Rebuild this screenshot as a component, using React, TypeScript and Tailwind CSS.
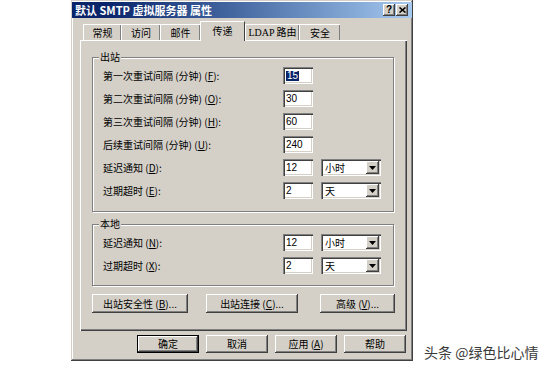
import type { ReactNode } from "react";

const raised =
  "bg-[#D4D0C8] shadow-[inset_-1px_-1px_0_#404040,inset_1px_1px_0_#ffffff,inset_-2px_-2px_0_#808080]";
const sunken =
  "bg-white shadow-[inset_1px_1px_0_#808080,inset_2px_2px_0_#404040,inset_-1px_-1px_0_#ffffff,inset_-2px_-2px_0_#D4D0C8]";

function Field({ value, selected }: { value: string; selected?: boolean }) {
  return (
    <div className={`flex h-[17px] w-[30px] items-center pl-[3px] font-['Liberation_Sans',sans-serif] text-[10px] leading-none ${sunken}`}>
      <span className={selected ? "bg-[#0A246A] px-[1px] text-white" : "text-black"}>{value}</span>
    </div>
  );
}

function Combo({ value }: { value: string }) {
  return (
    <div className={`ml-[8px] flex h-[17px] w-[60px] items-center justify-between pl-[4px] pr-[2px] text-[10px] leading-none ${sunken}`}>
      <span>{value}</span>
      <div className={`flex h-[13px] w-[13px] items-center justify-center ${raised}`}>
        <svg width="7" height="4" viewBox="0 0 7 4">
          <path d="M0 0h7L3.5 4z" fill="#000" />
        </svg>
      </div>
    </div>
  );
}

function Row({ label, value, unit, selected }: { label: ReactNode; value: string; unit?: string; selected?: boolean }) {
  return (
    <div className="flex h-[17px] items-center">
      <span className="w-[180px] text-[10px] leading-none text-black">{label}</span>
      <Field value={value} selected={selected} />
      {unit && <Combo value={unit} />}
    </div>
  );
}

function Group({ title, className, children }: { title: string; className: string; children: ReactNode }) {
  return (
    <div className={`relative flex w-[302px] flex-col gap-[6px] border border-[#808080] pl-[10px] pt-[9px] shadow-[1px_1px_0_#ffffff,inset_1px_1px_0_#ffffff] ${className}`}>
      <span className="absolute -top-[8px] left-[6px] bg-[#D4D0C8] px-[1px] text-[10px] leading-[14px]">{title}</span>
      {children}
    </div>
  );
}

function Btn({ children, className, def }: { children: ReactNode; className: string; def?: boolean }) {
  return (
    <div className={`flex items-center justify-center text-[10px] leading-none text-black ${def ? "border border-black" : ""} ${raised} ${className}`}>
      {children}
    </div>
  );
}

const tabs = [
  { name: "常规", w: "w-[38px]" },
  { name: "访问", w: "w-[39px]" },
  { name: "邮件", w: "w-[40px]" },
  { name: "传递", w: "w-[45px]", active: true },
  { name: "LDAP 路由", w: "w-[54px]" },
  { name: "安全", w: "w-[41px]" },
];

export default function App() {
  return (
    <div className="flex h-[367px] w-[548px] bg-white font-['Noto_Sans_CJK_SC','Noto_Sans',sans-serif] text-black">
      <div className="ml-[71px] flex h-[361px] w-[342px] flex-col bg-[#D4D0C8] pt-[2px] shadow-[inset_-1px_-1px_0_#404040,inset_1px_1px_0_#D4D0C8,inset_-2px_-2px_0_#808080,inset_2px_2px_0_#ffffff]">
        {/* title bar */}
        <div className="mx-[1px] flex h-[16px] items-center justify-between bg-linear-to-r from-[#0A246A] from-10% to-[#A6CAF0] pl-[3px] pr-[4px]">
          <span className="text-[11px] font-bold leading-none text-white">默认 SMTP 虚拟服务器 属性</span>
          <div className="flex gap-[1px]">
            <div className={`flex h-[12px] w-[12px] items-center justify-center font-['Liberation_Sans',sans-serif] text-[10px] font-bold leading-none ${raised}`}>?</div>
            <div className={`flex h-[12px] w-[12px] items-center justify-center ${raised}`}>
              <svg width="7" height="6" viewBox="0 0 7 6">
                <path d="M0.5 0.5l6 5M6.5 0.5l-6 5" stroke="#000" strokeWidth="1.6" />
              </svg>
            </div>
          </div>
        </div>

        {/* tabs */}
        <div className="ml-[12px] mt-[4px] flex h-[18px] items-end">
          {tabs.map((t) => (
            <div
              key={t.name}
              className={`flex items-center justify-center border-l border-t border-white border-r-[#404040] text-[10px] leading-none ${t.w} ${
                t.active
                  ? "relative z-10 -mb-[1px] h-[20px] border-r bg-[#D4D0C8] pb-[2px]"
                  : "h-[16px] shadow-[inset_-1px_0_0_#808080]"
              } ${t.name.startsWith("LDAP") ? "font-['Liberation_Serif','Noto_Sans_CJK_SC',serif]" : ""}`}
            >
              {t.name}
            </div>
          ))}
        </div>

        {/* panel */}
        <div className="ml-[9px] flex h-[291px] w-[327px] flex-col border-l border-t border-white pl-[11px] pt-[16px] shadow-[inset_-1px_-1px_0_#404040,inset_-2px_-2px_0_#808080]">
          <Group title="出站" className="h-[155px]">
            <Row label={<>第一次重试间隔 (分钟) (<u>F</u>):</>} value="15" selected />
            <Row label={<>第二次重试间隔 (分钟) (<u>O</u>):</>} value="30" />
            <Row label={<>第三次重试间隔 (分钟) (<u>H</u>):</>} value="60" />
            <Row label={<>后续重试间隔 (分钟) (<u>U</u>):</>} value="240" />
            <Row label={<>延迟通知 (<u>D</u>):</>} value="12" unit="小时" />
            <Row label={<>过期超时 (<u>E</u>):</>} value="2" unit="天" />
          </Group>
          <Group title="本地" className="mt-[12px] h-[62px]">
            <Row label={<>延迟通知 (<u>N</u>):</>} value="12" unit="小时" />
            <Row label={<>过期超时 (<u>X</u>):</>} value="2" unit="天" />
          </Group>
          <div className="mt-[8px] flex">
            <Btn className="h-[19px] w-[96px]">出站安全性 (<u>B</u>)...</Btn>
            <Btn className="ml-[18px] h-[19px] w-[92px]">出站连接 (<u>C</u>)...</Btn>
            <Btn className="ml-[22px] h-[19px] w-[75px]">高级 (<u>V</u>)...</Btn>
          </div>
        </div>

        {/* dialog buttons */}
        <div className="mt-[4px] flex gap-[7px] pl-[66px]">
          <Btn def className="h-[18px] w-[62px]">确定</Btn>
          <Btn className="h-[18px] w-[62px]">取消</Btn>
          <Btn className="h-[18px] w-[62px]">应用 (<u>A</u>)</Btn>
          <Btn className="h-[18px] w-[62px]">帮助</Btn>
        </div>
      </div>

      <span className="mb-[8px] ml-[11px] self-end text-[14px] leading-none text-[#3a3a3a]">头条 @绿色比心情</span>
    </div>
  );
}
